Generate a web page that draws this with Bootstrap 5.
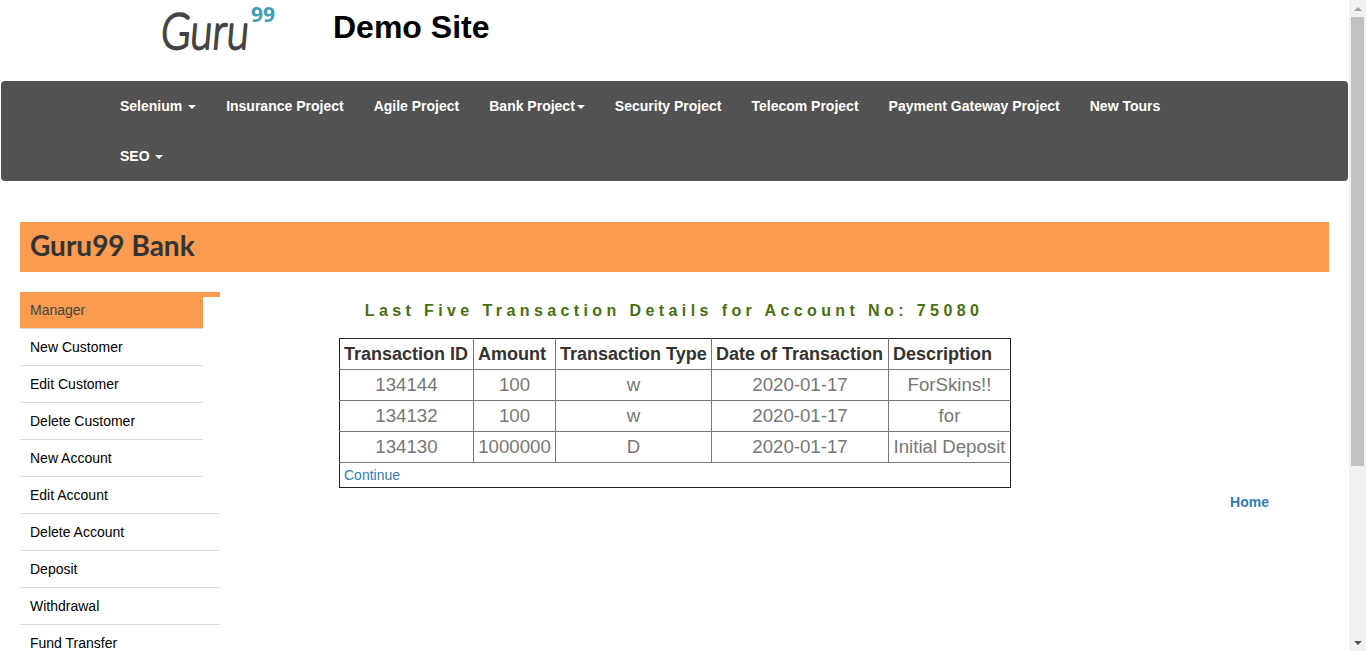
<!DOCTYPE html>
<html lang="en">
<head>
<meta charset="utf-8">
<title>Guru99 Bank</title>
<link href="https://cdn.jsdelivr.net/npm/bootstrap@5.3.0/dist/css/bootstrap.min.css" rel="stylesheet">
<style>
html,body{height:100%;overflow:hidden}
body{font-family:"Liberation Sans",Arial,sans-serif;font-size:14px;line-height:20px;color:#333;background:#fff}
.page-pane{width:1349px;flex:none;overflow:hidden}
.bar-track{width:17px;flex:none;background:#f1f1f1}
.bar-btn{height:17px}
.bar-thumb{height:449px;margin:0 2px;background:#c1c1c1}
.tri-up{width:0;height:0;border-left:4px solid transparent;border-right:4px solid transparent;border-bottom:4px solid #a3a3a3}
.tri-down{width:0;height:0;border-left:4px solid transparent;border-right:4px solid transparent;border-top:4px solid #505050}
.site-top{height:81px}
.logo-box{width:333px;height:60px;flex:none}
.logo-box svg{display:block;margin-left:150px}
.logo-word{font-family:"Lato",sans-serif;font-size:50px;font-weight:300;fill:#444;stroke:#444;stroke-width:2px;stroke-linejoin:round}
.logo-num{font-family:"Open Sans",sans-serif;font-size:21px;font-weight:700;fill:#3fa0b4}
.site-title{font-size:32px;line-height:33px;font-weight:700;color:#000;margin:11px 0 0}
.top-nav{margin:0 1px;width:1347px;height:100px;background:#525252;border-radius:4px;padding:0 120px 0 104px;align-items:flex-start}
.top-nav .nav-link{color:#fff;font-weight:700;font-size:14px;line-height:20px;padding:15px}
.caret-down{display:inline-block;width:0;height:0;margin-left:2px;vertical-align:middle;border-top:4px solid #fff;border-left:4px solid transparent;border-right:4px solid transparent}
.bank-band{margin:41px 20px 20px;height:50px;background:#f99b50;padding-left:10px}
.bank-band h1{font-family:"Lato",sans-serif;font-size:28px;line-height:47px;font-weight:700;color:#333;margin:0}
.side-col{width:200px;margin-left:20px;flex:none;border-top:5px solid #f99b50}
.side-link{display:block;height:37px;line-height:36px;padding-left:10px;color:#000;text-decoration:none;border-bottom:1px solid #ddd}
.side-link.short{width:183px}
.side-link.head{height:32px;line-height:26px;color:#444;background:#f99b50;background-clip:padding-box}
.main-col{width:1129px;flex:none}
.sub-title{font-size:16px;font-weight:700;letter-spacing:4.4px;color:#47700f;text-align:center;margin:9px 0 17px;width:908px}
.txn-table{border-collapse:collapse;margin-left:119px}
.txn-table td{border:1px solid #777;padding:0 4px;font-size:18.67px;line-height:30px;color:#777;text-align:center;white-space:nowrap}
.txn-table tr.hdr td{font-size:18px;font-weight:700;color:#333;text-align:left;border-top-color:#222}
.txn-table td:first-child{border-left-color:#222}
.txn-table td:last-child{border-right-color:#222}
.txn-table tr:last-child td{border-bottom-color:#222}
.txn-table td.cont{font-size:14px;line-height:24px;text-align:left}
.col-a{width:134px}
.col-b{width:82px}
.col-c{width:156px}
.col-d{width:177px}
.col-e{width:122px}
.txn-table a{color:#337ab7;text-decoration:none}
.home-wrap{text-align:right;padding:4px 80px 0 0}
.home-wrap a{color:#337ab7;font-weight:700;text-decoration:none}
</style>
</head>
<body class="d-flex">
<div class="page-pane">
<header class="site-top d-flex">
  <div class="logo-box">
    <svg width="140" height="60" viewBox="0 0 140 60" role="img" aria-label="Guru99">
      <text class="logo-word" x="10" y="49" textLength="88" lengthAdjust="spacingAndGlyphs" transform="skewX(-5) translate(4 0)">Guru</text>
      <text class="logo-num" x="101" y="22">99</text>
    </svg>
  </div>
  <div class="site-title">Demo Site</div>
</header>
<nav class="top-nav nav">
  <a class="nav-link" href="#">Selenium <span class="caret-down"></span></a>
  <a class="nav-link" href="#">Insurance Project</a>
  <a class="nav-link" href="#">Agile Project</a>
  <a class="nav-link" href="#">Bank Project<span class="caret-down"></span></a>
  <a class="nav-link" href="#">Security Project</a>
  <a class="nav-link" href="#">Telecom Project</a>
  <a class="nav-link" href="#">Payment Gateway Project</a>
  <a class="nav-link" href="#">New Tours</a>
  <a class="nav-link" href="#">SEO <span class="caret-down"></span></a>
</nav>
<div class="bank-band"><h1>Guru99 Bank</h1></div>
<div class="d-flex">
  <aside class="side-col">
    <a class="side-link short head" href="#">Manager</a>
    <a class="side-link short" href="#">New Customer</a>
    <a class="side-link short" href="#">Edit Customer</a>
    <a class="side-link short" href="#">Delete Customer</a>
    <a class="side-link short" href="#">New Account</a>
    <a class="side-link" href="#">Edit Account</a>
    <a class="side-link" href="#">Delete Account</a>
    <a class="side-link" href="#">Deposit</a>
    <a class="side-link" href="#">Withdrawal</a>
    <a class="side-link" href="#">Fund Transfer</a>
  </aside>
  <main class="main-col">
    <p class="sub-title">Last Five Transaction Details for Account No: 75080</p>
    <table class="txn-table">
      <colgroup><col class="col-a"><col class="col-b"><col class="col-c"><col class="col-d"><col class="col-e"></colgroup>
      <tr class="hdr"><td>Transaction ID</td><td>Amount</td><td>Transaction Type</td><td>Date of Transaction</td><td>Description</td></tr>
      <tr><td>134144</td><td>100</td><td>w</td><td>2020-01-17</td><td>ForSkins!!</td></tr>
      <tr><td>134132</td><td>100</td><td>w</td><td>2020-01-17</td><td>for</td></tr>
      <tr><td>134130</td><td>1000000</td><td>D</td><td>2020-01-17</td><td>Initial Deposit</td></tr>
      <tr><td class="cont" colspan="5"><a href="#">Continue</a></td></tr>
    </table>
    <div class="home-wrap"><a href="#">Home</a></div>
  </main>
</div>
</div>
<div class="bar-track d-flex flex-column">
  <div class="bar-btn d-flex justify-content-center align-items-center"><div class="tri-up"></div></div>
  <div class="bar-thumb"></div>
  <div class="flex-grow-1"></div>
  <div class="bar-btn d-flex justify-content-center align-items-center"><div class="tri-down"></div></div>
</div>
<script src="https://cdn.jsdelivr.net/npm/bootstrap@5.3.0/dist/js/bootstrap.bundle.min.js"></script>
</body>
</html>
